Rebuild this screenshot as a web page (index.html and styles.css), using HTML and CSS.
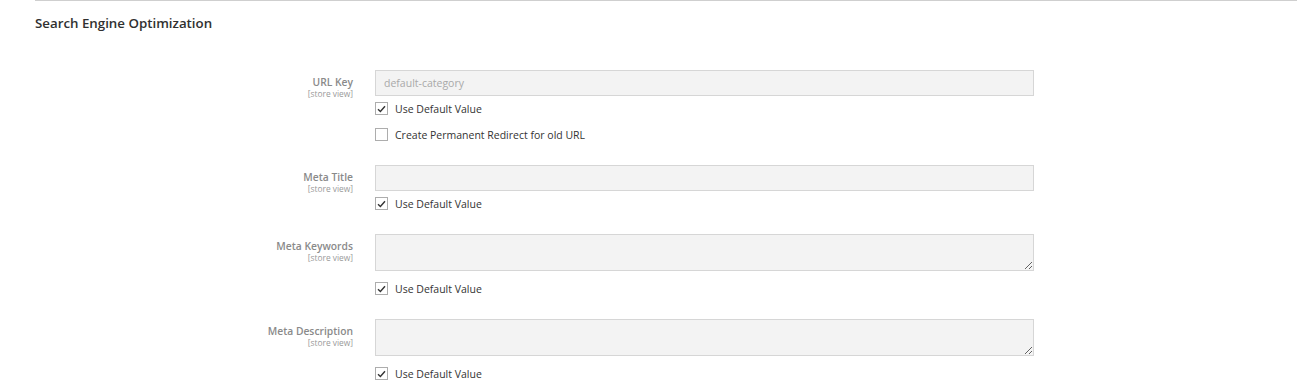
FILE: index.html
```html
<!DOCTYPE html>
<html>
<head>
  <title>Category - Search Engine Optimization</title>
  <link rel="stylesheet" href="styles.css">
</head>
<body>
  <div class="section">
    <h2 class="section-title">Search Engine Optimization</h2>

    <div class="field">
      <div class="field-label">
        <span>URL Key</span>
        <small>[store view]</small>
      </div>
      <div class="control">
        <input type="text" class="input-text" value="default-category" disabled />
        <label class="check">
          <span class="box checked"><svg width="9" height="8" viewBox="0 0 9 8"><path d="M1 4.2 L3.4 6.5 L8 1.2" fill="none" stroke="#333" stroke-width="1.4"/></svg></span>
          Use Default Value
        </label>
        <label class="check">
          <span class="box"></span>
          Create Permanent Redirect for old URL
        </label>
      </div>
    </div>

    <div class="field">
      <div class="field-label">
        <span>Meta Title</span>
        <small>[store view]</small>
      </div>
      <div class="control">
        <input type="text" class="input-text" disabled />
        <label class="check">
          <span class="box checked"><svg width="9" height="8" viewBox="0 0 9 8"><path d="M1 4.2 L3.4 6.5 L8 1.2" fill="none" stroke="#333" stroke-width="1.4"/></svg></span>
          Use Default Value
        </label>
      </div>
    </div>

    <div class="field field-area">
      <div class="field-label">
        <span>Meta Keywords</span>
        <small>[store view]</small>
      </div>
      <div class="control">
        <textarea class="input-text" disabled></textarea>
        <label class="check">
          <span class="box checked"><svg width="9" height="8" viewBox="0 0 9 8"><path d="M1 4.2 L3.4 6.5 L8 1.2" fill="none" stroke="#333" stroke-width="1.4"/></svg></span>
          Use Default Value
        </label>
      </div>
    </div>

    <div class="field field-area">
      <div class="field-label">
        <span>Meta Description</span>
        <small>[store view]</small>
      </div>
      <div class="control">
        <textarea class="input-text" disabled></textarea>
        <label class="check">
          <span class="box checked"><svg width="9" height="8" viewBox="0 0 9 8"><path d="M1 4.2 L3.4 6.5 L8 1.2" fill="none" stroke="#333" stroke-width="1.4"/></svg></span>
          Use Default Value
        </label>
      </div>
    </div>
  </div>
</body>
</html>
```

FILE: styles.css
```css
body {
  margin: 0;
  font-family: "Open Sans", sans-serif;
  color: #333;
  background: #fff;
}
.section {
  margin-left: 35px;
  border-top: 1px solid #cfcfcf;
}
.section-title {
  margin: 12px 0 37px;
  font-size: 13.3px;
  line-height: 20px;
  font-weight: 600;
  color: #303030;
}
.field {
  display: grid;
  grid-template-columns: 318px 659px;
  column-gap: 22px;
  margin-bottom: 24px;
}
.field-label {
  text-align: right;
  color: #8a8a8a;
  font-size: 10.3px;
  font-weight: 600;
  line-height: 13px;
  padding-top: 6px;
}
.field-label span {
  display: block;
}
.field-label small {
  display: block;
  font-size: 8.4px;
  font-weight: 400;
  line-height: 9px;
  color: #9a9a9a;
}
.input-text {
  display: block;
  box-sizing: border-box;
  width: 659px;
  height: 26px;
  margin: 0;
  padding: 0 8px;
  border: 1px solid #d6d6d6;
  background: #f3f3f3;
  font-family: "Open Sans", sans-serif;
  font-size: 10.5px;
  color: #a9a9a9;
}
textarea.input-text {
  height: 37px;
  resize: vertical;
}
.check {
  display: flex;
  align-items: center;
  gap: 7px;
  height: 13px;
  margin-top: 6px;
  font-size: 10.5px;
  color: #333;
}
.check + .check {
  margin-top: 13px;
}
.field-area .check {
  margin-top: 11px;
}
.box {
  box-sizing: border-box;
  width: 13px;
  height: 13px;
  border: 1px solid #adadad;
  background: #fff;
  display: flex;
  align-items: center;
  justify-content: center;
}
```
